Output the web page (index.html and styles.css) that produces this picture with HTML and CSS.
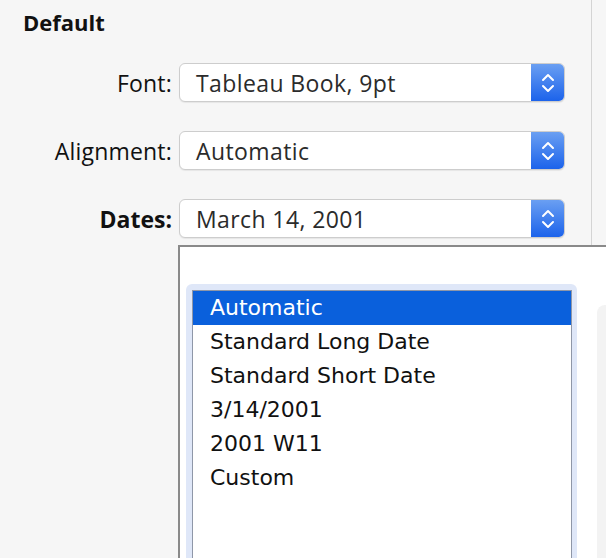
FILE: index.html
```html
<!DOCTYPE html>
<html lang="en">
<head>
  <meta charset="UTF-8">
  <title>Default format</title>
  <link rel="stylesheet" href="styles.css">
</head>
<body>
  <div class="panel">
    <h2>Default</h2>
    <div class="fields">
      <label>Font:</label>
      <div class="select"><span>Tableau Book, 9pt</span><i class="stepper"><svg width="14" height="22" viewBox="0 0 14 22"><path d="M2 8 L7 3 L12 8 M2 14 L7 19 L12 14" fill="none" stroke="#fff" stroke-width="2" stroke-linecap="round" stroke-linejoin="round"/></svg></i></div>

      <label>Alignment:</label>
      <div class="select"><span>Automatic</span><i class="stepper"><svg width="14" height="22" viewBox="0 0 14 22"><path d="M2 8 L7 3 L12 8 M2 14 L7 19 L12 14" fill="none" stroke="#fff" stroke-width="2" stroke-linecap="round" stroke-linejoin="round"/></svg></i></div>

      <label class="strong">Dates:</label>
      <div class="select"><span>March 14, 2001</span><i class="stepper"><svg width="14" height="22" viewBox="0 0 14 22"><path d="M2 8 L7 3 L12 8 M2 14 L7 19 L12 14" fill="none" stroke="#fff" stroke-width="2" stroke-linecap="round" stroke-linejoin="round"/></svg></i></div>
    </div>
  </div>

  <div class="popup">
    <div class="ring">
      <ul class="list">
        <li class="selected">Automatic</li>
        <li>Standard Long Date</li>
        <li>Standard Short Date</li>
        <li>3/14/2001</li>
        <li>2001 W11</li>
        <li>Custom</li>
      </ul>
    </div>
    <div class="side"></div>
  </div>
</body>
</html>
```

FILE: styles.css
```css
html, body { margin: 0; height: 100%; overflow: hidden; }
body { background: #f6f6f6; font-family: "Open Sans", "Noto Sans", sans-serif; color: #111; position: relative; }

.panel { width: 592px; height: 100%; border-right: 1px solid #d4d4d4; box-sizing: border-box; }
h2 { margin: 0; padding: 7px 0 0 23px; font-size: 22px; font-weight: 700; line-height: 30px; }

.fields { display: grid; grid-template-columns: 172px 386px; column-gap: 7px; row-gap: 29px; align-items: center; margin-top: 26px; }
.fields label { text-align: right; font-size: 23px; letter-spacing: 0.2px; }
.fields label.strong { font-weight: 700; letter-spacing: 0; }

.select { display: flex; height: 39px; background: #fff; border: 1px solid #cdcdcd; border-radius: 6px; box-sizing: border-box; box-shadow: 0 1px 1px #0001; overflow: hidden; }
.select span { flex: 1; padding-left: 16px; font-size: 23px; line-height: 38px; color: #2b2b2b; letter-spacing: 0.4px; }
.stepper { width: 33px; display: flex; align-items: center; justify-content: center; background: linear-gradient(#6a9ff2, #1c63eb); }

.popup { position: absolute; left: 178px; top: 245px; right: 0; bottom: 0; background: #fff; border-top: 2px solid #8a8a8a; border-left: 2px solid #8a8a8a; display: flex; align-items: stretch; padding: 37px 0 0 6px; overflow: hidden; }
.ring { background: #dfe7f8; padding: 6px 5px 0 6px; border-radius: 6px 6px 0 0; display: flex; }
.list { list-style: none; margin: 0; padding: 0; width: 378px; background: #fff; border: 1px solid #8f97a8; border-bottom: none; }
.list li { height: 34px; line-height: 34px; padding-left: 17px; font-family: "DejaVu Sans", sans-serif; font-size: 22px; color: #111; }
.list li.selected { background: #0a60dc; color: #fff; }
.side { margin: 21px 0 0 20px; flex: 1; background: #f3f3f3; border-radius: 8px 0 0 0; }
```
